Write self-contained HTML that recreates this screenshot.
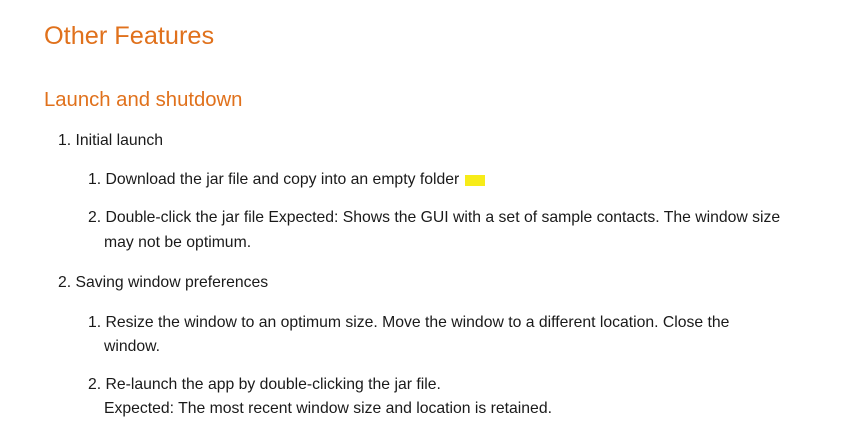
<!DOCTYPE html>
<html><head><meta charset="utf-8"><style>
body{margin:0;width:847px;height:436px;background:#fff;font-family:"Liberation Sans",sans-serif;color:#1a1a1a;position:relative;overflow:hidden}
div{position:absolute;white-space:nowrap;line-height:20px;font-size:15.75px}
.h1{font-size:25.3px;color:#e0711c;line-height:30px}
.h2{font-size:20.3px;color:#e0711c;line-height:26px}
.hl{background:#f7ec18;height:11px;width:20px;left:465px;top:175px}
</style></head><body>
<div class="h1" style="left:44px;top:21px">Other Features</div>
<div class="h2" style="left:44px;top:87px">Launch and shutdown</div>
<div style="left:58px;top:131px">1. Initial launch</div>
<div class="hl"></div>
<div style="left:88px;top:170px">1. Download the jar file and copy into an empty folder</div>
<div style="left:88px;top:208px">2. Double-click the jar file Expected: Shows the GUI with a set of sample contacts. The window size</div>
<div style="left:104px;top:233px">may not be optimum.</div>
<div style="left:58px;top:273px">2. Saving window preferences</div>
<div style="left:88px;top:313px">1. Resize the window to an optimum size. Move the window to a different location. Close the</div>
<div style="left:104px;top:337px">window.</div>
<div style="left:88px;top:375px">2. Re-launch the app by double-clicking the jar file.</div>
<div style="left:104px;top:399px">Expected: The most recent window size and location is retained.</div>
</body></html>
